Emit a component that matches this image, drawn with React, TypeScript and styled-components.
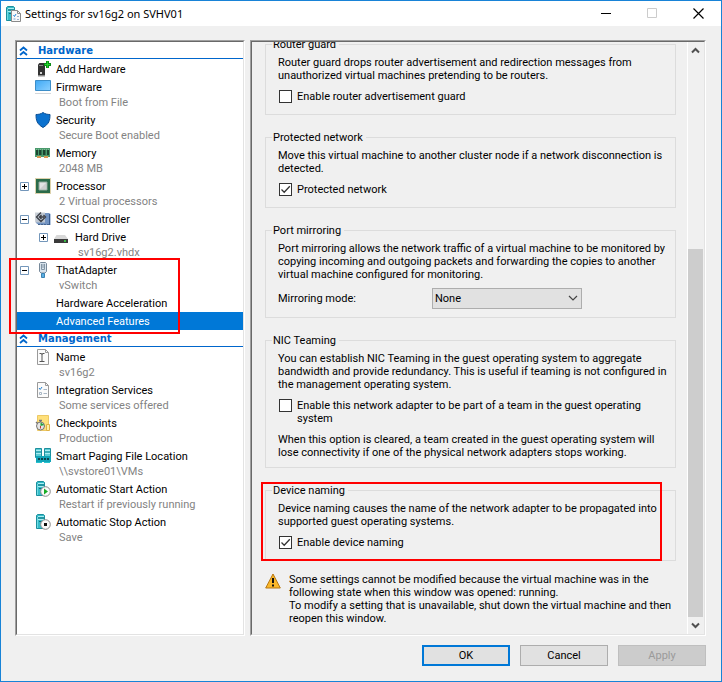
import React from "react";
import styled, { createGlobalStyle } from "styled-components";

const GlobalStyle = createGlobalStyle`
  * { box-sizing: border-box; }
  body {
    margin: 0;
    background: #f0f0f0;
    color: #000;
    font: 11px/13px Roboto, "Liberation Sans", sans-serif;
  }
`;

const Window = styled.div`
  display: flex;
  flex-direction: column;
  height: 100vh;
  border: 1px solid #1883d7;
  background: #f0f0f0;
`;

const TitleBar = styled.header`
  display: flex;
  align-items: center;
  flex: 0 0 25px;
  padding-left: 4px;
  background: #fff;
`;

const Title = styled.h1`
  flex: 1;
  margin: 0 0 0 4px;
  font: 11px/16px "Noto Sans", "Open Sans", sans-serif;
  white-space: nowrap;
`;

const CaptionButton = styled.button`
  display: flex;
  align-items: center;
  justify-content: center;
  width: 46px;
  height: 25px;
  padding: 0;
  border: 0;
  background: transparent;
`;

const Panels = styled.main`
  display: flex;
  flex: 1;
  gap: 5px;
  min-height: 0;
  padding: 14px 15px 0 14px;
`;

const Sunken = styled.div`
  border: 1px solid;
  border-color: #a0a0a0 #fff #fff #a0a0a0;
`;

const SunkenInner = styled.div`
  display: flex;
  height: 100%;
  border: 1px solid;
  border-color: #696969 #e3e3e3 #e3e3e3 #696969;
`;

const TreeFrame = styled(Sunken)`
  flex: 0 0 230px;
`;

const DetailsFrame = styled(Sunken)`
  flex: 1;
  min-width: 0;
`;

const Tree = styled.nav`
  flex: 1;
  min-width: 0;
  background: #fff;
`;

const SectionHeader = styled.h2`
  display: flex;
  align-items: center;
  gap: 10px;
  height: 17px;
  margin: 0 0 1px;
  padding: 2px 0 0 2px;
  border-bottom: 1px solid #0066cc;
  color: #0066cc;
  font: bold 10px/14px "DejaVu Sans", sans-serif;
`;

const Row = styled.div<{ $level?: number; $selected?: boolean }>`
  display: flex;
  align-items: center;
  height: 18px;
  padding-left: ${(p) => 3 + (p.$level ?? 0) * 19}px;
  background: ${(p) => (p.$selected ? "#0078d7" : "transparent")};
  color: ${(p) => (p.$selected ? "#fff" : "#000")};
  white-space: nowrap;
`;

const ExpanderSlot = styled.span`
  display: flex;
  flex: 0 0 15px;
`;

const Expander = styled.button`
  display: flex;
  width: 9px;
  height: 9px;
  padding: 0;
  border: 0;
  background: transparent;
`;

const IconSlot = styled.span`
  display: flex;
  flex: 0 0 21px;
  height: 16px;
`;

const Detail = styled.div<{ $level?: number }>`
  height: 15px;
  padding-left: ${(p) => 42 + (p.$level ?? 0) * 19}px;
  color: #838383;
  white-space: nowrap;
`;

const Marked = styled.div`
  position: relative;
`;

const Highlight = styled.div<{ $inset: string }>`
  position: absolute;
  inset: ${(p) => p.$inset};
  border: 2px solid #f00;
  pointer-events: none;
`;

const Scroller = styled.div`
  display: flex;
  flex: 1;
  flex-direction: column;
  justify-content: flex-end;
  min-width: 0;
  overflow: hidden;
  padding: 0 11px 9px 13px;
`;

const Groups = styled.div`
  display: flex;
  flex-direction: column;
  gap: 16px;
`;

const Group = styled.fieldset`
  min-width: 0;
  margin: 0;
  padding: 5px 12px 8px;
  border: 1px solid #dcdcdc;

  legend {
    margin-left: -6px;
    padding: 0 3px 0 1px;
  }
`;

const Text = styled.p`
  margin: 0;
  white-space: pre;
`;

const CheckRow = styled.label`
  display: flex;
  gap: 5px;
  min-height: 16px;
  margin: 8px 0;
  padding-left: 1px;
  white-space: pre-line;

  &:last-child {
    margin-bottom: 0;
  }
`;

const CheckBox = styled.input`
  appearance: none;
  flex: 0 0 13px;
  width: 13px;
  height: 13px;
  margin: 0;
  border: 1px solid #333;
  background: #fff;

  &:checked {
    background: #fff
      url("data:image/svg+xml,%3Csvg xmlns='http://www.w3.org/2000/svg' viewBox='0 0 11 11'%3E%3Cpath d='M1.5 5.5 4.2 8.2 9.8 2.2' fill='none' stroke='%23333' stroke-width='1.3'/%3E%3C/svg%3E");
  }
`;

const SelectRow = styled.div`
  display: flex;
  align-items: center;
  height: 22px;
  margin-top: 6px;

  label {
    flex: 0 0 154px;
  }
`;

const SelectBox = styled.div`
  position: relative;
  width: 150px;

  svg {
    position: absolute;
    top: 7px;
    right: 4px;
    pointer-events: none;
  }
`;

const Select = styled.select`
  display: block;
  appearance: none;
  width: 100%;
  height: 21px;
  padding: 0 2px;
  border: 1px solid #adadad;
  border-radius: 0;
  background: #e1e1e1;
  color: #000;
  font: inherit;
`;

const Warning = styled.div`
  display: flex;
  gap: 8px;
  margin-top: 12px;

  svg {
    flex: none;
  }
`;

const ScrollBar = styled.div`
  display: flex;
  flex: 0 0 17px;
  flex-direction: column;
  border-left: 1px solid #fff;
`;

const ScrollButton = styled.button`
  display: flex;
  align-items: center;
  justify-content: center;
  flex: 0 0 17px;
  padding: 0 2px 0 0;
  border: 0;
  background: transparent;
`;

const Track = styled.div`
  display: flex;
  flex: 1;
  flex-direction: column;
  justify-content: flex-end;
  padding-right: 1px;
`;

const Thumb = styled.div`
  height: 66%;
  background: #cdcdcd;
`;

const Footer = styled.footer`
  display: flex;
  justify-content: flex-end;
  gap: 10px;
  padding: 9px 15px 15px;
`;

const PushButton = styled.button<{ $primary?: boolean }>`
  width: 88px;
  height: 21px;
  padding: 0;
  border: ${(p) => (p.$primary ? "2px solid #0078d7" : "1px solid #adadad")};
  background: #e1e1e1;
  color: #000;
  font: inherit;

  &:disabled {
    border-color: #bfbfbf;
    background: #cccccc;
    color: #9a9a9a;
  }
`;

const Svg = ({ children, size = 16 }: { children: React.ReactNode; size?: number }) => (
  <svg width={size} height={size} viewBox={`0 0 ${size} ${size}`} aria-hidden="true">
    {children}
  </svg>
);

const ServerTower = () => (
  <>
    <path d="M1.5 1.5 2.5.5h6l1 1v13h-8z" fill="#35bcc9" stroke="#1c8f9d" />
    <path d="M3 2.500h6M3 5.500h6" stroke="#a9eef2" />
    <path d="M2 4h7M4 7.500h5" stroke="#14707d" />
    <path d="M2.500 3v11" stroke="#6fdbe3" />
  </>
);

const SettingsIcon = () => (
  <Svg>
    <ServerTower />
    <path d="M6.500 4.500h6l3 3v8h-9z" fill="#f8f8f8" stroke="#8a8a8a" />
    <path d="M12.500 4.500v3h3" fill="none" stroke="#8a8a8a" />
    <path d="m8.500 9 1 1.500L11 8" fill="none" stroke="#2484d8" />
    <path d="M12 10.500h2M12 13.500h2" stroke="#9bb3cc" />
    <path d="M8.500 12h2v2h-2z" fill="#b4cde8" />
  </Svg>
);

const AddHardwareIcon = () => (
  <Svg>
    <path d="M3 3.500 4.500 2H10v12H3z" fill="#333" />
    <path d="M3 14h7v1.500H3z" fill="#8b8b8b" />
    <path d="M4 4.500h4" stroke="#888" />
    <path d="M5 11h2v2H5z" fill="#d4d4d4" />
    <path d="M11 0h3v2h2v3h-2v2h-3V5H9V2h2z" fill="#0c8d18" />
    <path d="M12 .5h1V3h2v1h-2v2.500h-1V4h-2V3h2z" fill="#22d62c" />
  </Svg>
);

const FirmwareIcon = () => (
  <Svg>
    <defs>
      <linearGradient id="screen" x1="0" y1="0" x2="1" y2="1">
        <stop offset="0" stopColor="#3fa9f5" />
        <stop offset="1" stopColor="#8bd0ff" />
      </linearGradient>
    </defs>
    <path d="M.5 1.500h15v10H.5z" fill="url(#screen)" stroke="#3c8ec9" />
    <path d="M0 14.500h16" stroke="#d3d7db" />
  </Svg>
);

const SecurityIcon = () => (
  <Svg>
    <path d="M8 .5C6 2 3.500 2.500 1 2.500c0 6 1 9.500 7 13 6-3.500 7-7 7-13C12.500 2.500 10 2 8 .5z" fill="#0b72cf" stroke="#0a4f95" />
  </Svg>
);

const MemoryIcon = () => (
  <Svg>
    <path d="M0 3h15v9H0z" fill="#4a9a6c" />
    <path d="M1 5h2v5H1zM4 5h2.500v5H4zM8 5h2.500v5H8zM12 5h2v5h-2z" fill="#1c4632" />
    <path d="M1 4.500h13" stroke="#7db895" strokeDasharray="1 1" />
    <path d="M2 12h4M9 12h4" stroke="#d79a53" strokeWidth="2" />
  </Svg>
);

const ProcessorIcon = () => (
  <Svg>
    <path d="M.5.5h15v15H.5z" fill="none" stroke="#b8a558" strokeDasharray="1 1" />
    <path d="M1 1h14v14H1z" fill="#2a6b49" />
    <path d="M4 4h8v8H4z" fill="#e3e3e3" stroke="#8fa79a" />
    <path d="m5 11 6-6v6z" fill="#cecece" />
  </Svg>
);

const ScsiIcon = () => (
  <Svg>
    <path d="M2 2h12l1.500 1v11H4L1 12z" fill="#7394c2" />
    <path d="M14.500 3v11" stroke="#385a8c" />
    <path d="M0 1.500h10v10H0z" fill="#c6ccd4" opacity=".9" />
    <path d="M6 1.500 1.500 6 6 10.500 10.500 6 8.500 4M9 6H5M6.500 4l-2 2 2 2" fill="none" stroke="#3b3e44" strokeWidth="1.300" />
    <path d="M3 13.500h12" stroke="#45658f" strokeDasharray="2 1" />
  </Svg>
);

const DriveIcon = () => (
  <Svg>
    <path d="M2.500 6h8.500l3 4H0z" fill="#d8d8d8" />
    <path d="M0 10h14v4H0z" fill="#3a3a3a" />
    <path d="M10 12h2" stroke="#38e449" strokeWidth="1.500" />
  </Svg>
);

const AdapterIcon = () => (
  <Svg>
    <path d="M4.500 1.500 5.500.5h5l1 1v8l-1.500 1.500H6L4.500 9.500z" fill="#d9e4ed" stroke="#76899a" />
    <path d="M6.500 2v5.500h3V2M8 2v4" fill="none" stroke="#8396a6" />
    <path d="M6.500 11.500h3v4h-3z" fill="#5aaee2" stroke="#3c83b3" />
  </Svg>
);

const Page = () => (
  <>
    <path d="M2.500.5h8l3 3v12h-11z" fill="#fbfbfb" stroke="#9a9a9a" />
    <path d="M10.500.5v3h3" fill="none" stroke="#9a9a9a" />
  </>
);

const NameIcon = () => (
  <Svg>
    <Page />
    <path d="M4.500 4.500h2l.5 1 .5-1h2M7 5v7M4.500 12.500h5" fill="none" stroke="#555" />
  </Svg>
);

const ServicesIcon = () => (
  <Svg>
    <Page />
    <path d="m4 6 1.200 1.500L7 5" fill="none" stroke="#2381d1" />
    <path d="M8.500 7.500H12M8.500 11.500H12" stroke="#a9b7c5" />
    <path d="M4.500 10.500h2v2h-2z" fill="#fff" stroke="#a9b7c5" />
  </Svg>
);

const CheckpointsIcon = () => (
  <Svg>
    <path d="M2.500.5h11v15h-11z" fill="#ffe07a" stroke="#ecc865" />
    <path d="M11.500 9.500h3v6h-3z" fill="#fff1a8" stroke="#e0b246" />
    <circle cx="5.500" cy="11" r="4" fill="#e6e6e6" stroke="#747474" />
    <path d="M4 5.500h3M5.500 5v2M1 7l1.500 1.500" stroke="#747474" strokeWidth="1.300" />
    <path d="m5.500 7.500 4 2.500-4 1z" fill="#23a33a" />
    <path d="M5.500 11v2.500" stroke="#c23b2f" />
  </Svg>
);

const PagingIcon = () => (
  <Svg>
    <path d="M.5.5h6v9h-6zM9.500.5h6v9h-6z" fill="#5ccbd4" stroke="#1c8f9d" />
    <path d="M1 2.500h5M10 2.500h5M1 5.500h5M10 5.500h5" stroke="#a9eef2" />
    <path d="M0 4h7M9 4h7" stroke="#1c8f9d" />
    <path d="M1 8h15v6H1z" fill="#12a5b8" />
    <path d="M3 10h2v2H3zM6 10h2v2H6zM9 10h2v2H9zM12 10h2v2h-2z" fill="#0b4550" />
    <path d="M1 14.500h6M9 14.500h6" stroke="#29c3cf" />
  </Svg>
);

const ActionIcon = ({ stop }: { stop?: boolean }) => (
  <Svg>
    <ServerTower />
    <circle cx="10.500" cy="10.500" r="4.800" fill="#fafafa" stroke="#8a8a8a" />
    {stop ? <path d="M9 9h3v3H9z" fill="#111" /> : <path d="m9 7.500 4 3-4 3z" fill="#18ad26" />}
  </Svg>
);

const DoubleChevron = () => (
  <svg width="9" height="10" viewBox="0 0 9 10" aria-hidden="true">
    <path d="m1 4.500 3.500-3L8 4.500M1 9l3.500-3L8 9" fill="none" stroke="#0066cc" strokeWidth="1.800" />
  </svg>
);

const ExpandToggle = ({ open, label }: { open: boolean; label: string }) => (
  <Expander aria-label={label} aria-expanded={open}>
    <Svg size={9}>
      <path d="M.5.5h8v8h-8z" fill="#fff" stroke="#7396ba" />
      <path d={open ? "M2 4.500h5" : "M2 4.500h5M4.500 2v5"} stroke="#000" />
    </Svg>
  </Expander>
);

type ItemProps = {
  label: string;
  detail?: string;
  icon?: React.ReactNode;
  level?: number;
  open?: boolean;
  selected?: boolean;
};

const Item = ({ label, detail, icon, level, open, selected }: ItemProps) => (
  <>
    <Row $level={level} $selected={selected}>
      <ExpanderSlot>{open !== undefined && <ExpandToggle open={open} label={label} />}</ExpanderSlot>
      <IconSlot>{icon}</IconSlot>
      {label}
    </Row>
    {detail && <Detail $level={level}>{detail}</Detail>}
  </>
);

const Check = ({ label, checked }: { label: string; checked?: boolean }) => (
  <CheckRow>
    <CheckBox type="checkbox" defaultChecked={checked} />
    {label}
  </CheckRow>
);

const Chevron = ({ up }: { up?: boolean }) => (
  <svg width="9" height="7" viewBox="0 0 9 7" aria-hidden="true">
    <path d={up ? "m1 5.500 3.500-3.500L8 5.500" : "m1 1.500 3.500 3.500L8 1.500"} fill="none" stroke="#505050" strokeWidth="2" />
  </svg>
);

export default function App() {
  return (
    <Window>
      <GlobalStyle />
      <TitleBar>
        <SettingsIcon />
        <Title>Settings for sv16g2 on SVHV01</Title>
        <CaptionButton aria-label="Minimize">
          <Svg size={11}><path d="M0 5.500h10" stroke="#000" /></Svg>
        </CaptionButton>
        <CaptionButton aria-label="Maximize" disabled>
          <Svg size={11}><path d="M.5.5h9v9h-9z" fill="none" stroke="#ccc" /></Svg>
        </CaptionButton>
        <CaptionButton aria-label="Close">
          <Svg size={11}><path d="m.5.5 10 10m0-10-10 10" stroke="#000" strokeWidth="1.200" /></Svg>
        </CaptionButton>
      </TitleBar>

      <Panels>
        <TreeFrame>
          <SunkenInner>
            <Tree aria-label="Settings">
              <SectionHeader><DoubleChevron />Hardware</SectionHeader>
              <Item label="Add Hardware" icon={<AddHardwareIcon />} />
              <Item label="Firmware" detail="Boot from File" icon={<FirmwareIcon />} />
              <Item label="Security" detail="Secure Boot enabled" icon={<SecurityIcon />} />
              <Item label="Memory" detail="2048 MB" icon={<MemoryIcon />} />
              <Item label="Processor" detail="2 Virtual processors" icon={<ProcessorIcon />} open={false} />
              <Item label="SCSI Controller" icon={<ScsiIcon />} open />
              <Item label="Hard Drive" detail="sv16g2.vhdx" icon={<DriveIcon />} level={1} open={false} />
              <Marked>
                <Item label="ThatAdapter" detail="vSwitch" icon={<AdapterIcon />} open />
                <Item label="Hardware Acceleration" />
                <Item label="Advanced Features" selected />
                <Highlight $inset="-3px 63px -4px -8px" />
              </Marked>
              <SectionHeader><DoubleChevron />Management</SectionHeader>
              <Item label="Name" detail="sv16g2" icon={<NameIcon />} />
              <Item label="Integration Services" detail="Some services offered" icon={<ServicesIcon />} />
              <Item label="Checkpoints" detail="Production" icon={<CheckpointsIcon />} />
              <Item label="Smart Paging File Location" detail="\\svstore01\VMs" icon={<PagingIcon />} />
              <Item label="Automatic Start Action" detail="Restart if previously running" icon={<ActionIcon />} />
              <Item label="Automatic Stop Action" detail="Save" icon={<ActionIcon stop />} />
            </Tree>
          </SunkenInner>
        </TreeFrame>

        <DetailsFrame>
          <SunkenInner>
            <Scroller>
              <Groups>
                <Group>
                  <legend>Router guard</legend>
                  <Text>{"Router guard drops router advertisement and redirection messages from\nunauthorized virtual machines pretending to be routers."}</Text>
                  <Check label="Enable router advertisement guard" />
                </Group>
                <Group>
                  <legend>Protected network</legend>
                  <Text>{"Move this virtual machine to another cluster node if a network disconnection is\ndetected."}</Text>
                  <Check label="Protected network" checked />
                </Group>
                <Group>
                  <legend>Port mirroring</legend>
                  <Text>{"Port mirroring allows the network traffic of a virtual machine to be monitored by\ncopying incoming and outgoing packets and forwarding the copies to another\nvirtual machine configured for monitoring."}</Text>
                  <SelectRow>
                    <label htmlFor="mirroring">Mirroring mode:</label>
                    <SelectBox>
                      <Select id="mirroring" defaultValue="None">
                        <option>None</option>
                        <option>Destination</option>
                        <option>Source</option>
                      </Select>
                      <svg width="10" height="7" viewBox="0 0 10 7" aria-hidden="true">
                        <path d="m1 1 4 4 4-4" fill="none" stroke="#444" strokeWidth="1.200" />
                      </svg>
                    </SelectBox>
                  </SelectRow>
                </Group>
                <Group>
                  <legend>NIC Teaming</legend>
                  <Text>{"You can establish NIC Teaming in the guest operating system to aggregate\nbandwidth and provide redundancy. This is useful if teaming is not configured in\nthe management operating system."}</Text>
                  <Check label={"Enable this network adapter to be part of a team in the guest operating\nsystem"} />
                  <Text>{"When this option is cleared, a team created in the guest operating system will\nlose connectivity if one of the physical network adapters stops working."}</Text>
                </Group>
                <Marked>
                  <Group>
                    <legend>Device naming</legend>
                    <Text>{"Device naming causes the name of the network adapter to be propagated into\nsupported guest operating systems."}</Text>
                    <Check label="Enable device naming" checked />
                  </Group>
                  <Highlight $inset="-2px 14px 0 -4px" />
                </Marked>
              </Groups>
              <Warning>
                <Svg>
                  <path d="M8 1 15.300 15H.7z" fill="#fbb829" stroke="#b57612" strokeLinejoin="round" />
                  <path d="M8 5v5M8 11.500v2" stroke="#111" strokeWidth="2" />
                </Svg>
                <Text>{"Some settings cannot be modified because the virtual machine was in the\nfollowing state when this window was opened: running.\nTo modify a setting that is unavailable, shut down the virtual machine and then\nreopen this window."}</Text>
              </Warning>
            </Scroller>
            <ScrollBar>
              <ScrollButton aria-label="Scroll up"><Chevron up /></ScrollButton>
              <Track><Thumb /></Track>
              <ScrollButton aria-label="Scroll down"><Chevron /></ScrollButton>
            </ScrollBar>
          </SunkenInner>
        </DetailsFrame>
      </Panels>

      <Footer>
        <PushButton $primary>OK</PushButton>
        <PushButton>Cancel</PushButton>
        <PushButton disabled>Apply</PushButton>
      </Footer>
    </Window>
  );
}
